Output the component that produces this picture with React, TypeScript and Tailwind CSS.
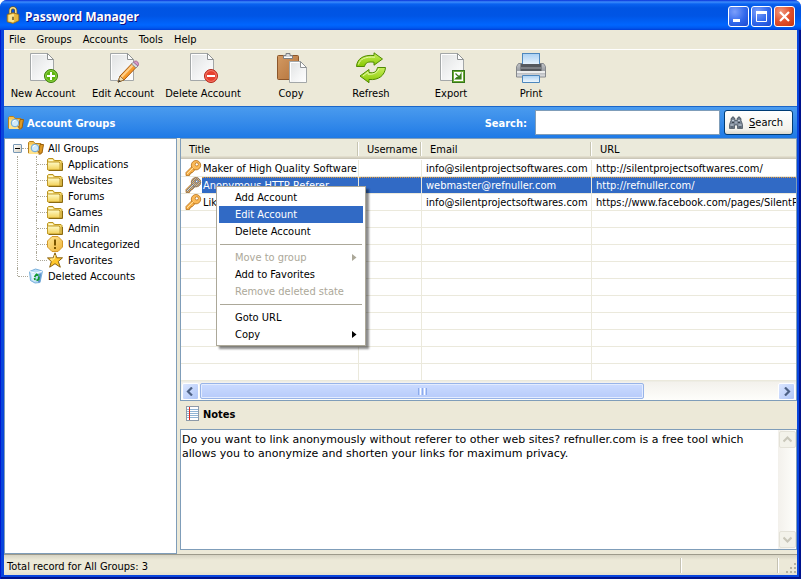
import type { ReactNode } from "react"

const rows = [
  {
    title: "Maker of High Quality Software",
    email: "info@silentprojectsoftwares.com",
    url: "http://silentprojectsoftwares.com/",
  },
  {
    title: "Anonymous HTTP Referer",
    email: "webmaster@refnuller.com",
    url: "http://refnuller.com/",
    selected: true,
  },
  {
    title: "Lik",
    email: "info@silentprojectsoftwares.com",
    url: "https://www.facebook.com/pages/SilentP",
  },
]

const emptyRows = [0, 1, 2, 3, 4, 5, 6, 7, 8, 9]

const notes =
  "Do you want to link anonymously without referer to other web sites? refnuller.com is a free tool which allows you to anonymize and shorten your links for maximum privacy."

/* ---------- icons ---------- */

function LockIcon() {
  return (
    <svg width="18" height="18" viewBox="0 0 16 16">
      <path d="M5.5 8V4.2a2.5 2.7 0 0 1 5 0V8" fill="none" stroke="#6f5a1c" strokeWidth="2.6" />
      <path d="M5.5 8V4.2a2.5 2.7 0 0 1 5 0V8" fill="none" stroke="#f3dc8c" strokeWidth="1.4" />
      <path d="M2.800 7.500 8 6l5.200 1.500v5.500L8 15.500l-5.200-1.500z" fill="#e8b93c" stroke="#8b6414" strokeWidth=".7" />
      <path d="M4 8.200 8 7l1 .5v6L8 14.500l-4-1z" fill="#fbe58f" />
      <path d="M8 9.500v3" stroke="#5a4210" strokeWidth="1.200" />
    </svg>
  )
}

function Sheet({ x = 3, y = 1, w = 24, h = 28 }: { x?: number; y?: number; w?: number; h?: number }) {
  const f = 6
  return (
    <g transform={`translate(${x + 0.5} ${y + 0.5})`}>
      <path
        d={`M0 0H${w - f - 1}L${w - 1} ${f}V${h - 1}H0Z`}
        fill="url(#sheetFill)"
        stroke="#a3a7a8"
      />
      <path d={`M1 ${h - 2}V1H${w - f - 2}`} fill="none" stroke="#fff" />
      <path d={`M${w - f - 1} 0V${f}H${w - 1}Z`} fill="#fff" stroke="#8f9394" />
    </g>
  )
}

function Defs() {
  return (
    <svg width="0" height="0" className="absolute" aria-hidden="true">
      <defs>
        <linearGradient id="sheetFill" x1="0" y1="0" x2="1" y2="1">
          <stop offset="0" stopColor="#dfe1e2" />
          <stop offset="0.6" stopColor="#f4f5f5" />
          <stop offset="1" stopColor="#ffffff" />
        </linearGradient>
        <linearGradient id="clipFill" x1="0" y1="0" x2="1" y2="1">
          <stop offset="0" stopColor="#d39a63" />
          <stop offset="1" stopColor="#b3723a" />
        </linearGradient>
        <linearGradient id="arrowFill" x1="0" y1="0" x2="0" y2="1">
          <stop offset="0" stopColor="#c8ee5c" />
          <stop offset="1" stopColor="#86c800" />
        </linearGradient>
        <linearGradient id="folderFill" x1="0" y1="0" x2="0" y2="1">
          <stop offset="0" stopColor="#fffbc8" />
          <stop offset="1" stopColor="#f2cf55" />
        </linearGradient>
        <linearGradient id="goldFill" x1="0" y1="0" x2="1" y2="1">
          <stop offset="0" stopColor="#ffe894" />
          <stop offset="1" stopColor="#eeb238" />
        </linearGradient>
        <linearGradient id="paperBlue" x1="0" y1="0" x2="0" y2="1">
          <stop offset="0" stopColor="#a9d0f3" />
          <stop offset="1" stopColor="#f4faff" />
        </linearGradient>
        <linearGradient id="printerFill" x1="0" y1="0" x2="0" y2="1">
          <stop offset="0" stopColor="#c4c6ca" />
          <stop offset="0.5" stopColor="#9c9fa4" />
          <stop offset="1" stopColor="#e4e5e7" />
        </linearGradient>
      </defs>
    </svg>
  )
}

function NewIcon() {
  return (
    <svg width="32" height="32" viewBox="0 0 32 32">
      <Sheet />
      <circle cx="24" cy="24" r="6.500" fill="#5fb50f" stroke="#3c7d08" />
      <circle cx="24" cy="24" r="5.400" fill="none" stroke="#9bd85a" strokeWidth=".8" />
      <path d="M24 20v8M20 24h8" stroke="#fff" strokeWidth="2" />
    </svg>
  )
}

function EditIcon() {
  return (
    <svg width="32" height="32" viewBox="0 0 32 32">
      <Sheet />
      <path d="M11 30l2-6L25 11.500l4 4L17 28z" fill="#f79a2a" stroke="#a85a10" />
      <path d="M14.500 25 26 13" stroke="#ffd08a" strokeWidth="2" />
      <path d="M11 30l2-6 4 4z" fill="#f5dcae" stroke="#8a6a3a" strokeWidth=".8" />
      <path d="M11 30.500l1-2.800 1.800 1.800z" fill="#333" />
      <path d="M24.500 12 26.500 10l4.500 4-2 2z" fill="#d8dadd" stroke="#7b7f84" strokeWidth=".8" />
      <path d="M26.500 10l1-.8q2-.8 3.400 1 1.200 1.800.1 3.800z" fill="#dc98c8" stroke="#97618a" strokeWidth=".8" />
    </svg>
  )
}

function DeleteIcon() {
  return (
    <svg width="32" height="32" viewBox="0 0 32 32">
      <Sheet />
      <circle cx="24" cy="24" r="6.500" fill="#e8402f" stroke="#b3271a" />
      <circle cx="24" cy="24" r="5.400" fill="none" stroke="#f58d7d" strokeWidth=".8" />
      <path d="M20 24h8" stroke="#fff" strokeWidth="2" />
    </svg>
  )
}

function CopyIcon() {
  return (
    <svg width="32" height="32" viewBox="0 0 32 32">
      <rect x="2.500" y="3.500" width="21" height="24" rx="1" fill="url(#clipFill)" stroke="#8c562a" />
      <path d="M8.500 6.500v-3h2.500v-2h4v2h2.500v3z" fill="#d5d7d8" stroke="#7c7f82" />
      <path d="M9 5.500h8" stroke="#fff" />
      <Sheet x={14} y={9} w={18} h={22} />
    </svg>
  )
}

function RefreshIcon() {
  return (
    <svg width="32" height="32" viewBox="0 0 32 32">
      <path
        d="M1.500 14.500C2 7 8 2.500 19 3.500V.8l8.500 6.200-8.500 6.200v-3C13 9.500 10.500 10.500 9.500 14.500z"
        fill="url(#arrowFill)"
        stroke="#4f8a00"
      />
      <path d="M3.500 12.500C5 7 10 4.500 20 5.200" fill="none" stroke="#e4f8a4" />
      <path
        d="M30.500 15.500C30 23 24 28.500 14 27.500v3.200L5 24l9-6.500v3c6 1 7.500-1 8.500-5z"
        fill="url(#arrowFill)"
        stroke="#4f8a00"
      />
      <path d="M8 24l5-4v2.200q8 1 11-5.500" fill="none" stroke="#e4f8a4" />
    </svg>
  )
}

function ExportIcon() {
  return (
    <svg width="32" height="32" viewBox="0 0 32 32">
      <Sheet x={5} />
      <rect x="17.500" y="18.500" width="12" height="12" fill="#6fae38" stroke="#35761a" />
      <rect x="19" y="20" width="9" height="9" fill="#fff" />
      <path d="M20.500 21.500l4 4M26 21.500v5.500h-5.500z" fill="#3c7f1c" stroke="#3c7f1c" strokeWidth="1.200" />
      <path d="M22 21h4l-2 3z" fill="#fff" />
    </svg>
  )
}

function PrintIcon() {
  return (
    <svg width="32" height="32" viewBox="0 0 32 32">
      <path d="M3.500 11.500h25l2 3v10.500H1.500v-10.500z" fill="url(#printerFill)" stroke="#85888c" />
      <rect x="7.500" y="1.500" width="17" height="13" fill="url(#paperBlue)" stroke="#4d87bd" />
      <rect x="5.500" y="12" width="21" height="7" fill="#55585d" />
      <rect x="6" y="15" width="20" height="2" fill="#7d8085" />
      <rect x="2" y="19" width="28" height="2" fill="#eceded" />
      <path d="M7.500 23.500h17v7h-17z" fill="url(#paperBlue)" stroke="#4d87bd" />
    </svg>
  )
}

function FolderIcon() {
  return (
    <svg width="16" height="16" viewBox="0 0 16 16">
      <path d="M.5 13.500v-10l1-1h4.500l1.500 2h6.500l1 1v8.500h-14z" fill="#f3d568" stroke="#b8921f" />
      <path d="M1.500 3.500h4l1 2H1.500z" fill="#fffbd0" />
      <path d="M.5 13.500v-7l1-.5H12l1 1v7H1.500z" fill="url(#folderFill)" stroke="#c09a2a" />
      <path d="M2 14.500h13.500V7" fill="none" stroke="#8a6a12" />
    </svg>
  )
}

function SearchFolderIcon() {
  return (
    <svg width="16" height="16" viewBox="0 0 16 16">
      <path d="M.5 13v-10.500l1-1h4l1.500 2h6v9.500z" fill="#f5c556" stroke="#b8801c" />
      <path d="M12 4.500h3.500l-1.500 8.500-3.500 1z" fill="#e09a22" stroke="#99600c" />
      <path d="M1 4.500l10 .5v9H1z" fill="#ffe28c" />
      <circle cx="7" cy="8" r="3.800" fill="#cfeafc" stroke="#6aa6d8" />
      <path d="M5 7.200q.5-1.800 2.500-2" fill="none" stroke="#fff" />
      <path d="M10 11l2.500 3.500" stroke="#b07828" strokeWidth="1.800" />
    </svg>
  )
}

function WarningIcon() {
  return (
    <svg width="16" height="16" viewBox="0 0 16 16">
      <path d="M5 .5h6L15.500 5v6L11 15.500H5L.5 11V5z" fill="url(#goldFill)" stroke="#d3982a" />
      <path d="M8 3.500v6M8 11v2" stroke="#7a5600" strokeWidth="2" />
    </svg>
  )
}

function StarIcon() {
  return (
    <svg width="16" height="16" viewBox="0 0 16 16">
      <path
        d="M8 .8l1.800 5h5.700l-4.200 3.700 2 5.700L8 11.700 2.700 15.200l1.600-5.700L.5 5.900h5.700z"
        fill="#ffc72c"
        stroke="#8a6210"
      />
      <path d="M8 3l-1 4H3.500l2 2" fill="none" stroke="#fff0a8" />
    </svg>
  )
}

function RecycleIcon() {
  return (
    <svg width="16" height="16" viewBox="0 0 16 16">
      <path d="M1.500 3.500l6-2.500 7 2-2.500 11.500-5 .5-4.500-2.500z" fill="#b9dcf5" stroke="#79b0dc" />
      <path d="M1.500 3.500l6 1.700 7-2.200" fill="none" stroke="#fff" />
      <path d="M3 5l1.500 7 2.500 1.500V6z" fill="#e4f3fd" />
      <path d="M10.500 6l3-1-1.500 9-2 .5z" fill="#5f93cc" />
      <path d="M6.500 9l2-2.500 2 1M11 8.500l-.5 3-2 1M6.500 10l.5 2" fill="none" stroke="#119a2d" strokeWidth="1.800" />
    </svg>
  )
}

function KeyIcon({ selected }: { selected?: boolean }) {
  return (
    <svg width="17" height="16" viewBox="0 0 17 16" className="shrink-0">
      <path d="M7.500 6L1 12.500v3h3.500V14H6v-1.500h1.500L10.500 9z" fill="#f9b24a" stroke="#b5701a" strokeWidth=".8" />
      <circle cx="11" cy="5.200" r="4.700" fill="#fbb957" stroke="#b5701a" strokeWidth=".8" />
      <circle cx="11.800" cy="4.400" r="1.600" fill="#fff" stroke="#b5701a" strokeWidth=".8" />
      <path d="M2 14l6.500-6.500" stroke="#ffe0a4" />
      {selected && (
        <>
          <pattern id="dither" width="2" height="2" patternUnits="userSpaceOnUse">
            <rect width="1" height="1" fill="#316ac5" />
            <rect x="1" y="1" width="1" height="1" fill="#316ac5" />
          </pattern>
          <g fillOpacity=".7">
            <path d="M7.500 6L1 12.500v3h3.500V14H6v-1.500h1.500L10.500 9z" fill="url(#dither)" />
            <circle cx="11" cy="5.200" r="5" fill="url(#dither)" />
          </g>
        </>
      )}
    </svg>
  )
}

function BinocularsIcon() {
  return (
    <svg width="14" height="14" viewBox="0 0 14 14">
      <path
        d="M2 4.500V2.500H3V1h2v1.500h1V4.500h2V2.500h1V1h2v1.500h1v2l1.500 4V12.500H8.500V9h-3v3.500H.5V8.500z"
        fill="#7b8795"
        stroke="#4a5562"
        strokeWidth=".8"
      />
      <path d="M1.500 9h3M9.500 9h3M3 4.500h2M9 4.500h2" stroke="#c4ced9" />
      <path d="M1.500 11h3M9.500 11h3M3 6.500h2M9 6.500h2" stroke="#3d4651" />
      <path d="M6 5.500h2v2H6z" fill="#9faab8" />
    </svg>
  )
}

function NotesIcon() {
  return (
    <svg width="13" height="15" viewBox="0 0 13 15">
      <rect x=".5" y=".5" width="12" height="14" fill="#fff" stroke="#8d9aa8" />
      <path d="M1 3.500h11M1 5.500h11M1 7.500h11M1 9.500h11M1 11.500h11" stroke="#8fb4d4" />
      <path d="M3.500 1v13" stroke="#e02b20" />
    </svg>
  )
}

function Chevron({ dir, color }: { dir: "up" | "down" | "left" | "right"; color: string }) {
  const d = {
    up: "M0.500 6.500L4.500 2.500 8.500 6.500",
    down: "M0.500 2.500L4.500 6.500 8.500 2.500",
    left: "M6 0.500L2 4.500 6 8.500",
    right: "M3 0.500L7 4.500 3 8.500",
  }[dir]
  return (
    <svg width="9" height="9" viewBox="0 0 9 9">
      <path d={d} fill="none" stroke={color} strokeWidth="2.200" />
    </svg>
  )
}

/* ---------- title bar ---------- */

function TitleBar() {
  const box =
    "flex size-[21px] items-center justify-center rounded-[3px] border border-white bg-[radial-gradient(circle_at_30%_25%,#7c9ffb,#3168ec_55%,#1c49cf)]"
  return (
    <header className="flex h-[30px] items-center bg-[linear-gradient(#0831d9_0,#3c8cfb_2px,#0a62f0_4px,#0054e3_8px,#0055e5_16px,#0066ff_25px,#0058ee_28px,#003dd7_30px)] pr-[6px] pl-1">
      <LockIcon />
      <h1 className="ml-[3px] flex-1 pt-1 font-['Noto_Sans',sans-serif] text-[12px] leading-4 font-bold text-white [text-shadow:1px_1px_#0f1089]">
        Password Manager
      </h1>
      <div className="flex gap-[2px] pt-[3px]">
        <button aria-label="Minimize" className={box}>
          <svg width="15" height="15" viewBox="0 0 15 15">
            <path d="M2 11.500h7" stroke="#fff" strokeWidth="3" />
          </svg>
        </button>
        <button aria-label="Maximize" className={box}>
          <svg width="15" height="15" viewBox="0 0 15 15">
            <path d="M2.500 3v9.500h10V3" fill="none" stroke="#fff" />
            <path d="M2 3.500h11" stroke="#fff" strokeWidth="3" />
          </svg>
        </button>
        <button
          aria-label="Close"
          className="flex size-[21px] items-center justify-center rounded-[3px] border border-white bg-[radial-gradient(circle_at_30%_25%,#f09a80,#e2502c_50%,#c8350f)]"
        >
          <svg width="15" height="15" viewBox="0 0 15 15">
            <path d="M3 3l9 9M12 3l-9 9" stroke="#fff" strokeWidth="2.200" />
          </svg>
        </button>
      </div>
    </header>
  )
}

/* ---------- toolbar ---------- */

function ToolButton({ icon, children }: { icon: ReactNode; children: ReactNode }) {
  return (
    <button className="flex w-[76px] flex-col items-center gap-[3px] pt-[2px] leading-[14px] whitespace-nowrap">
      {icon}
      {children}
    </button>
  )
}

/* ---------- tree ---------- */

function TreeItem({ icon, children, last }: { icon: ReactNode; children: ReactNode; last?: boolean }) {
  return (
    <li className="flex h-4 items-center">
      <span className={last ? "h-2 w-px self-start border-l border-dotted border-[#aca899]" : "h-4 w-px border-l border-dotted border-[#aca899]"} />
      <span className="w-[10px] border-t border-dotted border-[#aca899]" />
      {icon}
      <span className="pt-[2px] pl-[5px]">{children}</span>
    </li>
  )
}

function Tree() {
  return (
    <nav className="w-[173px] shrink-0 border border-[#7f9db9] bg-white pt-px">
      <ul className="pl-2">
        <li>
          <div className="flex h-4 items-center">
            <button aria-label="Collapse" className="flex size-[9px] items-center justify-center rounded-[1px] border border-[#7898b5] bg-gradient-to-br from-white to-[#d6d0c0]">
              <span className="h-px w-[5px] bg-black" />
            </button>
            <span className="w-[6px] border-t border-dotted border-[#aca899]" />
            <SearchFolderIcon />
            <span className="pt-[2px] pl-1">All Groups</span>
          </div>
          <div className="ml-1 border-l border-dotted border-[#aca899] pl-[18px]">
            <ul>
              <TreeItem icon={<FolderIcon />}>Applications</TreeItem>
              <TreeItem icon={<FolderIcon />}>Websites</TreeItem>
              <TreeItem icon={<FolderIcon />}>Forums</TreeItem>
              <TreeItem icon={<FolderIcon />}>Games</TreeItem>
              <TreeItem icon={<FolderIcon />}>Admin</TreeItem>
              <TreeItem icon={<WarningIcon />}>Uncategorized</TreeItem>
              <TreeItem icon={<StarIcon />} last>
                Favorites
              </TreeItem>
            </ul>
          </div>
        </li>
        <li className="ml-1 flex h-4 items-center">
          <span className="h-2 w-px self-start border-l border-dotted border-[#aca899]" />
          <span className="w-[10px] border-t border-dotted border-[#aca899]" />
          <RecycleIcon />
          <span className="pt-[2px] pl-1">Deleted Accounts</span>
        </li>
      </ul>
    </nav>
  )
}

/* ---------- account list ---------- */

function Th({ children, last }: { children: ReactNode; last?: boolean }) {
  return (
    <th scope="col" className="h-[21px] p-0 font-normal">
      <div className="flex h-[21px] items-center border-b border-white bg-[linear-gradient(#ebeadb_17px,#e2decd_17px,#e2decd_18px,#d6d2c2_18px,#d6d2c2_19px,#cbc7b8_19px)] pl-2">
        <span className="flex-1 pt-[3px] text-left">{children}</span>
        {!last && <span className="h-[14px] w-[2px] border-r border-l border-r-white border-l-[#c7c5b2]" />}
      </div>
    </th>
  )
}

function AccountTable() {
  const cell =
    "h-[17px] overflow-hidden border-r border-b border-[#ebe9dc] p-0 whitespace-nowrap last:border-r-0"
  return (
    <table className="w-full table-fixed border-separate border-spacing-0">
      <colgroup>
        <col className="w-[178px]" />
        <col className="w-[63px]" />
        <col className="w-[170px]" />
        <col />
      </colgroup>
      <thead>
        <tr>
          <Th>Title</Th>
          <Th>Username</Th>
          <Th>Email</Th>
          <Th last>URL</Th>
        </tr>
      </thead>
      <tbody>
        {rows.map((row) => {
          const fill = row.selected
            ? "h-4 border-t border-dotted border-[#e29a3c] bg-[#316ac5] leading-4 text-white"
            : "h-4 leading-[18px]"
          return (
            <tr key={row.title}>
              <td className={cell}>
                <div className="flex h-4 pl-1">
                  <KeyIcon selected={row.selected} />
                  <div className={`${fill} min-w-0 flex-1 pl-px`}>{row.title}</div>
                </div>
              </td>
              <td className={cell}>
                <div className={fill} />
              </td>
              <td className={cell}>
                <div className={`${fill} pl-1`}>{row.email}</div>
              </td>
              <td className={cell}>
                <div className={`${fill} pl-1`}>{row.url}</div>
              </td>
            </tr>
          )
        })}
        {emptyRows.map((n) => (
          <tr key={n}>
            <td className={cell} />
            <td className={cell} />
            <td className={cell} />
            <td className={cell} />
          </tr>
        ))}
      </tbody>
    </table>
  )
}

function HorizontalScroll() {
  const btn =
    "flex size-[17px] shrink-0 items-center justify-center rounded-[2px] border border-white bg-gradient-to-br from-[#dbe6ff] to-[#b0c6f7]"
  return (
    <div className="flex h-[19px] items-center gap-px border-t border-[#eeede5] bg-gradient-to-b from-[#f3f1ec] to-[#fefefb] px-px">
      <button aria-label="Scroll left" className={btn}>
        <Chevron dir="left" color="#4d6185" />
      </button>
      <div className="flex-1">
        <div className="flex h-4 w-[77%] items-center justify-center gap-px rounded-[2px] border border-[#98b4e8] bg-gradient-to-b from-[#cbdbff] to-[#b7cbfa] shadow-[inset_0_0_0_1px_#e3ecff]">
          <span className="h-[7px] w-px bg-[#8cabec]" />
          <span className="h-[7px] w-px bg-white" />
          <span className="h-[7px] w-px bg-[#8cabec]" />
          <span className="h-[7px] w-px bg-white" />
          <span className="h-[7px] w-px bg-[#8cabec]" />
        </div>
      </div>
      <button aria-label="Scroll right" className={btn}>
        <Chevron dir="right" color="#4d6185" />
      </button>
    </div>
  )
}

/* ---------- context menu ---------- */

function MenuItem({ children, active, disabled, arrow }: { children: ReactNode; active?: boolean; disabled?: boolean; arrow?: boolean }) {
  return (
    <button
      role="menuitem"
      disabled={disabled}
      className={`flex h-[17px] w-full items-center pr-[6px] pl-4 leading-[17px] ${
        active ? "bg-[#316ac5] text-white" : disabled ? "text-[#aca899]" : "text-black"
      }`}
    >
      <span className="flex-1 text-left">{children}</span>
      {arrow && (
        <svg width="5" height="7" viewBox="0 0 5 7">
          <path d="M0 0l4.500 3.500L0 7z" fill="currentColor" />
        </svg>
      )}
    </button>
  )
}

function ContextMenu() {
  return (
    <div
      role="menu"
      className="absolute top-[47px] left-[35px] w-[150px] border border-[#aca899] bg-white p-[2px] shadow-[3px_3px_2px_rgba(0,0,0,0.45)]"
    >
      <MenuItem>Add Account</MenuItem>
      <MenuItem active>Edit Account</MenuItem>
      <MenuItem>Delete Account</MenuItem>
      <hr className="mx-px my-1 border-[#aca899]" />
      <MenuItem disabled arrow>
        Move to group
      </MenuItem>
      <MenuItem>Add to Favorites</MenuItem>
      <MenuItem disabled>Remove deleted state</MenuItem>
      <hr className="mx-px my-1 border-[#aca899]" />
      <MenuItem>Goto URL</MenuItem>
      <MenuItem arrow>Copy</MenuItem>
    </div>
  )
}

/* ---------- notes ---------- */

function Notes() {
  const btn =
    "flex size-[17px] items-center justify-center rounded-[2px] border border-[#e4e2d8] bg-[#f3f2ea]"
  return (
    <section className="flex flex-1 flex-col">
      <label htmlFor="notes" className="flex h-7 items-center gap-1 pb-1 pl-[6px] font-bold">
        <NotesIcon />
        <span className="pt-1">Notes</span>
      </label>
      <div className="flex min-h-[121px] flex-1 border border-[#7f9db9] bg-white">
        <textarea
          id="notes"
          readOnly
          value={notes}
          className="flex-1 resize-none overflow-hidden pt-[3px] pr-2 pl-px font-['DejaVu_Sans',sans-serif] text-[11px] leading-[14px] outline-none"
        />
        <div className="flex w-[18px] flex-col items-center justify-between bg-gradient-to-r from-[#f3f1ec] to-[#fefefb] py-px">
          <button aria-label="Scroll up" className={btn}>
            <Chevron dir="up" color="#c9c7ba" />
          </button>
          <button aria-label="Scroll down" className={btn}>
            <Chevron dir="down" color="#c9c7ba" />
          </button>
        </div>
      </div>
    </section>
  )
}

function StatusBar() {
  return (
    <footer className="flex h-[21px] items-center border-t border-[#9d9a8b] bg-[linear-gradient(#d6d3c3,#ece9d8_5px,#ece9d8_16px,#e2dfce)] pl-[3px]">
      <span className="flex-1 pt-1">Total record for All Groups: 3</span>
      <span className="h-[15px] w-[97px] border-l border-[#c5c2b2] shadow-[inset_1px_0_#fff]" />
      <span className="h-[15px] w-2 border-l border-[#c5c2b2] shadow-[inset_1px_0_#fff]" />
      <svg width="12" height="12" viewBox="0 0 12 12" className="mt-[6px]">
        <path
          d="M9 1h2v2h-2zM9 5h2v2h-2zM9 9h2v2h-2zM5 5h2v2h-2zM5 9h2v2h-2zM1 9h2v2h-2z"
          fill="#b5b2a0"
        />
      </svg>
    </footer>
  )
}

export default function App() {
  return (
    <div className="flex min-h-screen flex-col overflow-hidden rounded-t-[7px] bg-[#0a48e0] font-['DejaVu_Sans_Condensed','DejaVu_Sans',sans-serif] text-[11px] text-black">
      <Defs />
      <TitleBar />
      <div className="flex flex-1 flex-col bg-[#0845dd] px-1 pb-1 shadow-[inset_1px_0_#0019cf,inset_-2px_0_#00138c,inset_0_-2px_#00138c]">
        <div className="flex flex-1 flex-col bg-[#ece9d8]">
          <div className="flex h-5 items-center gap-[11px] border-b border-white pt-[2px] pl-[5px]">
            <button>File</button>
            <button>Groups</button>
            <button>Accounts</button>
            <button>Tools</button>
            <button>Help</button>
          </div>

          <div className="flex h-14 items-start gap-1 pl-px">
            <ToolButton icon={<NewIcon />}>New Account</ToolButton>
            <ToolButton icon={<EditIcon />}>Edit Account</ToolButton>
            <ToolButton icon={<DeleteIcon />}>Delete Account</ToolButton>
            <span className="w-1" />
            <ToolButton icon={<CopyIcon />}>Copy</ToolButton>
            <ToolButton icon={<RefreshIcon />}>Refresh</ToolButton>
            <ToolButton icon={<ExportIcon />}>Export</ToolButton>
            <ToolButton icon={<PrintIcon />}>Print</ToolButton>
          </div>

          <form className="flex h-8 items-center border-t border-[#1b66c9] bg-gradient-to-b from-[#4a9bee] to-[#1e7ae6] px-1 font-bold text-white">
            <SearchFolderIcon />
            <span className="flex-1 pt-[3px] pl-[3px]">Account Groups</span>
            <label htmlFor="search" className="pt-[3px] pr-2">
              Search:
            </label>
            <input
              id="search"
              type="text"
              className="h-[25px] w-[185px] border border-[#7f9db9] bg-white px-1 font-normal text-black outline-none"
            />
            <button
              type="button"
              className="ml-1 flex h-[25px] w-[69px] items-center gap-[6px] rounded-[3px] border border-[#003c74] bg-[linear-gradient(#ffffff,#f3f2ec_80%,#dcd8cc)] pl-1 font-normal text-black"
            >
              <BinocularsIcon />
              <span className="pt-[2px]">
                <u>S</u>earch
              </span>
            </button>
          </form>

          <main className="flex flex-1">
            <Tree />
            <div className="ml-[3px] flex min-w-0 flex-1 flex-col pb-1">
              <div className="relative border border-[#7f9db9] bg-white">
                <AccountTable />
                <HorizontalScroll />
                <ContextMenu />
              </div>
              <Notes />
            </div>
          </main>

          <StatusBar />
        </div>
      </div>
    </div>
  )
}
